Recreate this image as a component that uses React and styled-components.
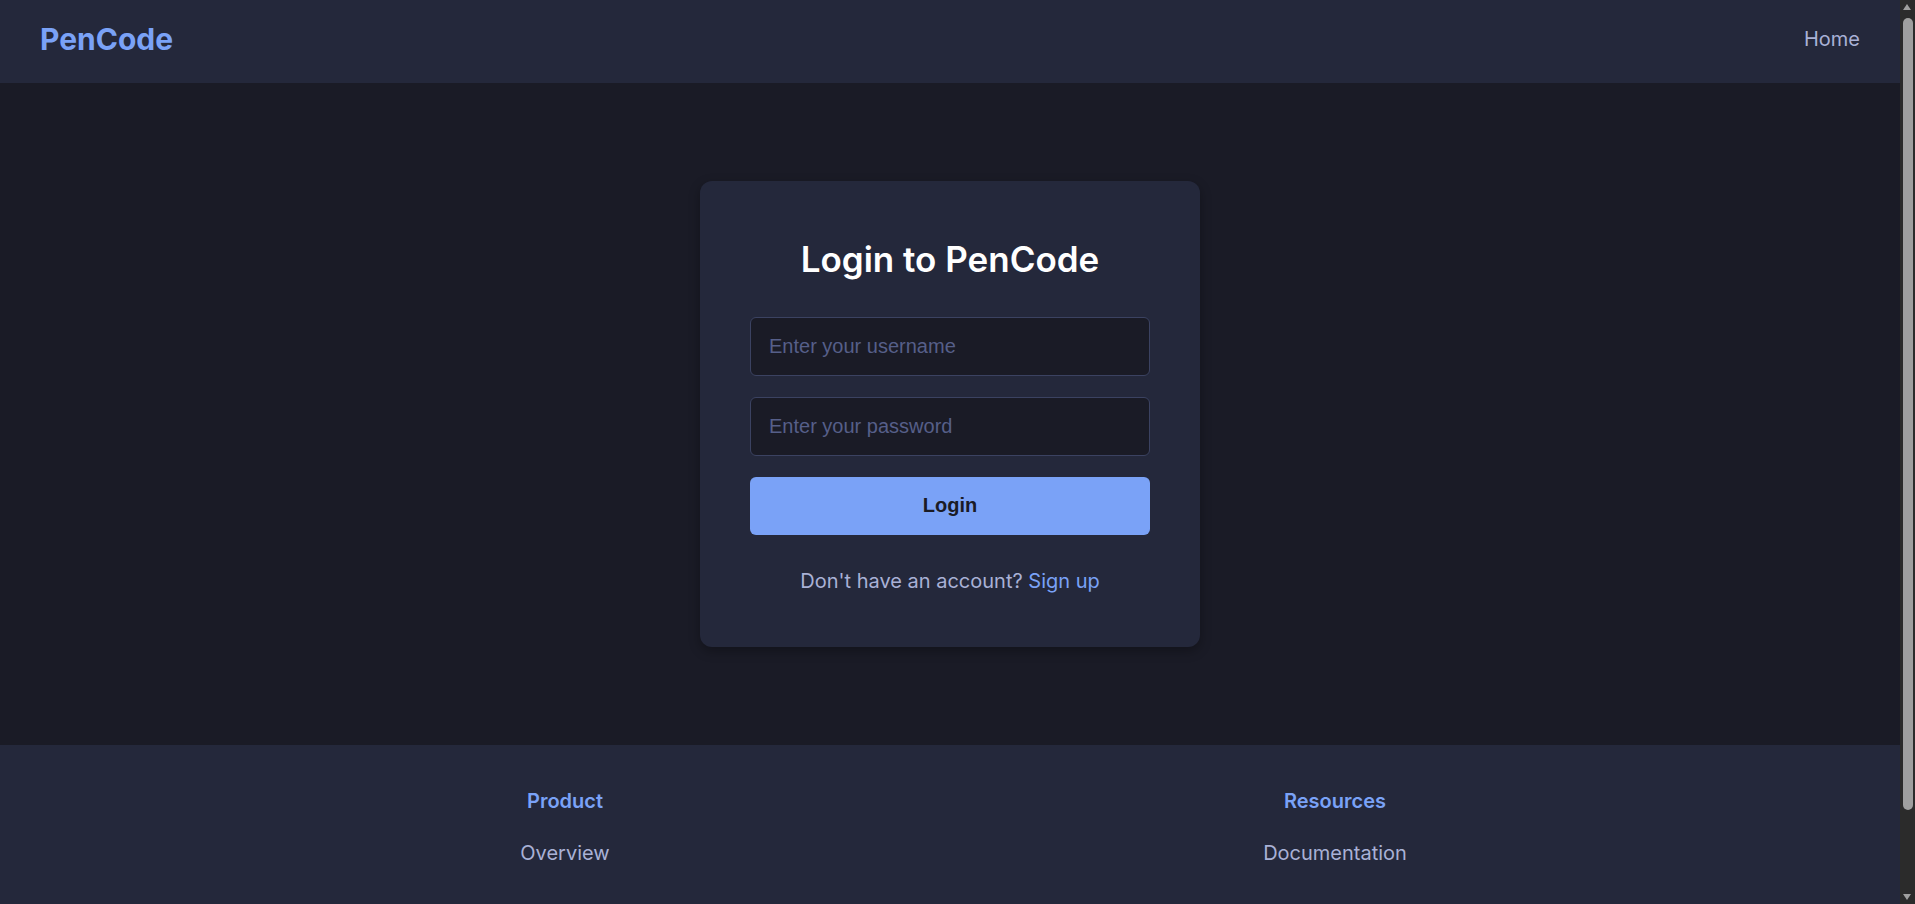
import React from "react";
import styled, { createGlobalStyle } from "styled-components";

const GlobalStyle = createGlobalStyle`
  html {
    font-size: 20px;
    color-scheme: dark;
  }
  * { box-sizing: border-box; }
  body {
    margin: 0;
    background: #1a1b26;
    color: #a9b1d6;
    font-family: Inter, "Noto Sans", sans-serif;
    line-height: 1.6;
  }
`;

const Page = styled.div`
  display: flex;
  flex-direction: column;
  min-height: 100vh;
  margin-right: 15px;
`;

/* Browser scrollbar drawn over the right edge of the window */
const ScrollTrack = styled.div`
  position: fixed;
  top: 0;
  right: 0;
  bottom: 0;
  width: 15px;
  background: #2b2b2b;
  z-index: 10;
`;

const ScrollThumb = styled.div`
  position: absolute;
  top: 18px;
  left: 3px;
  right: 2px;
  height: 792px;
  background: #9f9f9f;
  border-radius: 5px;
`;

const Arrow = styled.div`
  position: absolute;
  left: 3px;
  width: 0;
  height: 0;
  border-left: 4.5px solid transparent;
  border-right: 4.5px solid transparent;
  ${(p) =>
    p.$down
      ? "bottom: 4px; border-top: 6px solid #9f9f9f;"
      : "top: 4px; border-bottom: 6px solid #9f9f9f;"}
`;

const Header = styled.header`
  display: flex;
  align-items: center;
  justify-content: space-between;
  background: #24283b;
  padding: 15px 40px 20px;
`;

const Logo = styled.a`
  font-size: 30px;
  font-weight: 700;
  color: #7aa2f7;
  text-decoration: none;
  line-height: 48px;
`;

const NavLink = styled.a`
  font-size: 20px;
  color: #a9b1d6;
  text-decoration: none;
  line-height: 32px;
`;

const Main = styled.main`
  flex: 1;
  display: flex;
  justify-content: center;
  align-items: flex-start;
  padding: 98px 20px;
`;

const Card = styled.div`
  width: 500px;
  background: #24283b;
  border-radius: 12px;
  padding: 50px;
  box-shadow: 0 4px 12px rgba(0, 0, 0, 0.3);
  display: flex;
  flex-direction: column;
`;

const Title = styled.h2`
  margin: 0 0 28px;
  font-size: 35px;
  font-weight: 600;
  line-height: 57.6px;
  color: #ffffff;
  text-align: center;
`;

const Form = styled.form`
  display: flex;
  flex-direction: column;
  gap: 21px;
`;

const Input = styled.input`
  width: 100%;
  padding: 17px 18px;
  font-family: "Liberation Sans", Arial, sans-serif;
  font-size: 20px;
  background: #1a1b26;
  color: #c0caf5;
  border: 1px solid #3b4261;
  border-radius: 6px;
  outline: none;
  &::placeholder {
    color: #565f89;
  }
`;

const Button = styled.button`
  width: 100%;
  padding: 17.5px;
  font-family: "Liberation Sans", Arial, sans-serif;
  font-size: 20px;
  font-weight: 700;
  background: #7aa2f7;
  color: #1a1b26;
  border: none;
  border-radius: 6px;
  cursor: pointer;
`;

const Switch = styled.p`
  margin: 30px 0 0;
  font-size: 20px;
  text-align: center;
  color: #a9b1d6;
`;

const TextLink = styled.a`
  color: #7aa2f7;
  text-decoration: none;
`;

const Footer = styled.footer`
  background: #24283b;
  padding: 40px 20px 131px;
`;

const FooterGrid = styled.div`
  max-width: 1500px;
  margin: 0 auto;
  display: grid;
  grid-template-columns: repeat(2, 1fr);
  gap: 40px;
  text-align: center;
`;

const Column = styled.div`
  display: flex;
  flex-direction: column;
  align-items: center;
`;

const ColumnTitle = styled.h4`
  margin: 0 0 20px;
  font-size: 20px;
  font-weight: 600;
  color: #7aa2f7;
`;

const FooterLink = styled.a`
  font-size: 20px;
  color: #a9b1d6;
  text-decoration: none;
`;

export default function App() {
  return (
    <>
      <GlobalStyle />
      <ScrollTrack aria-hidden="true">
        <Arrow />
        <ScrollThumb />
        <Arrow $down />
      </ScrollTrack>
      <Page>
        <Header>
          <Logo href="#">PenCode</Logo>
          <NavLink href="#">Home</NavLink>
        </Header>
        <Main>
          <Card>
            <Title>Login to PenCode</Title>
            <Form onSubmit={(e) => e.preventDefault()}>
              <Input type="text" placeholder="Enter your username" />
              <Input type="password" placeholder="Enter your password" />
              <Button type="submit">Login</Button>
            </Form>
            <Switch>
              Don't have an account? <TextLink href="#">Sign up</TextLink>
            </Switch>
          </Card>
        </Main>
        <Footer>
          <FooterGrid>
            <Column>
              <ColumnTitle>Product</ColumnTitle>
              <FooterLink href="#">Overview</FooterLink>
            </Column>
            <Column>
              <ColumnTitle>Resources</ColumnTitle>
              <FooterLink href="#">Documentation</FooterLink>
            </Column>
          </FooterGrid>
        </Footer>
      </Page>
    </>
  );
}
